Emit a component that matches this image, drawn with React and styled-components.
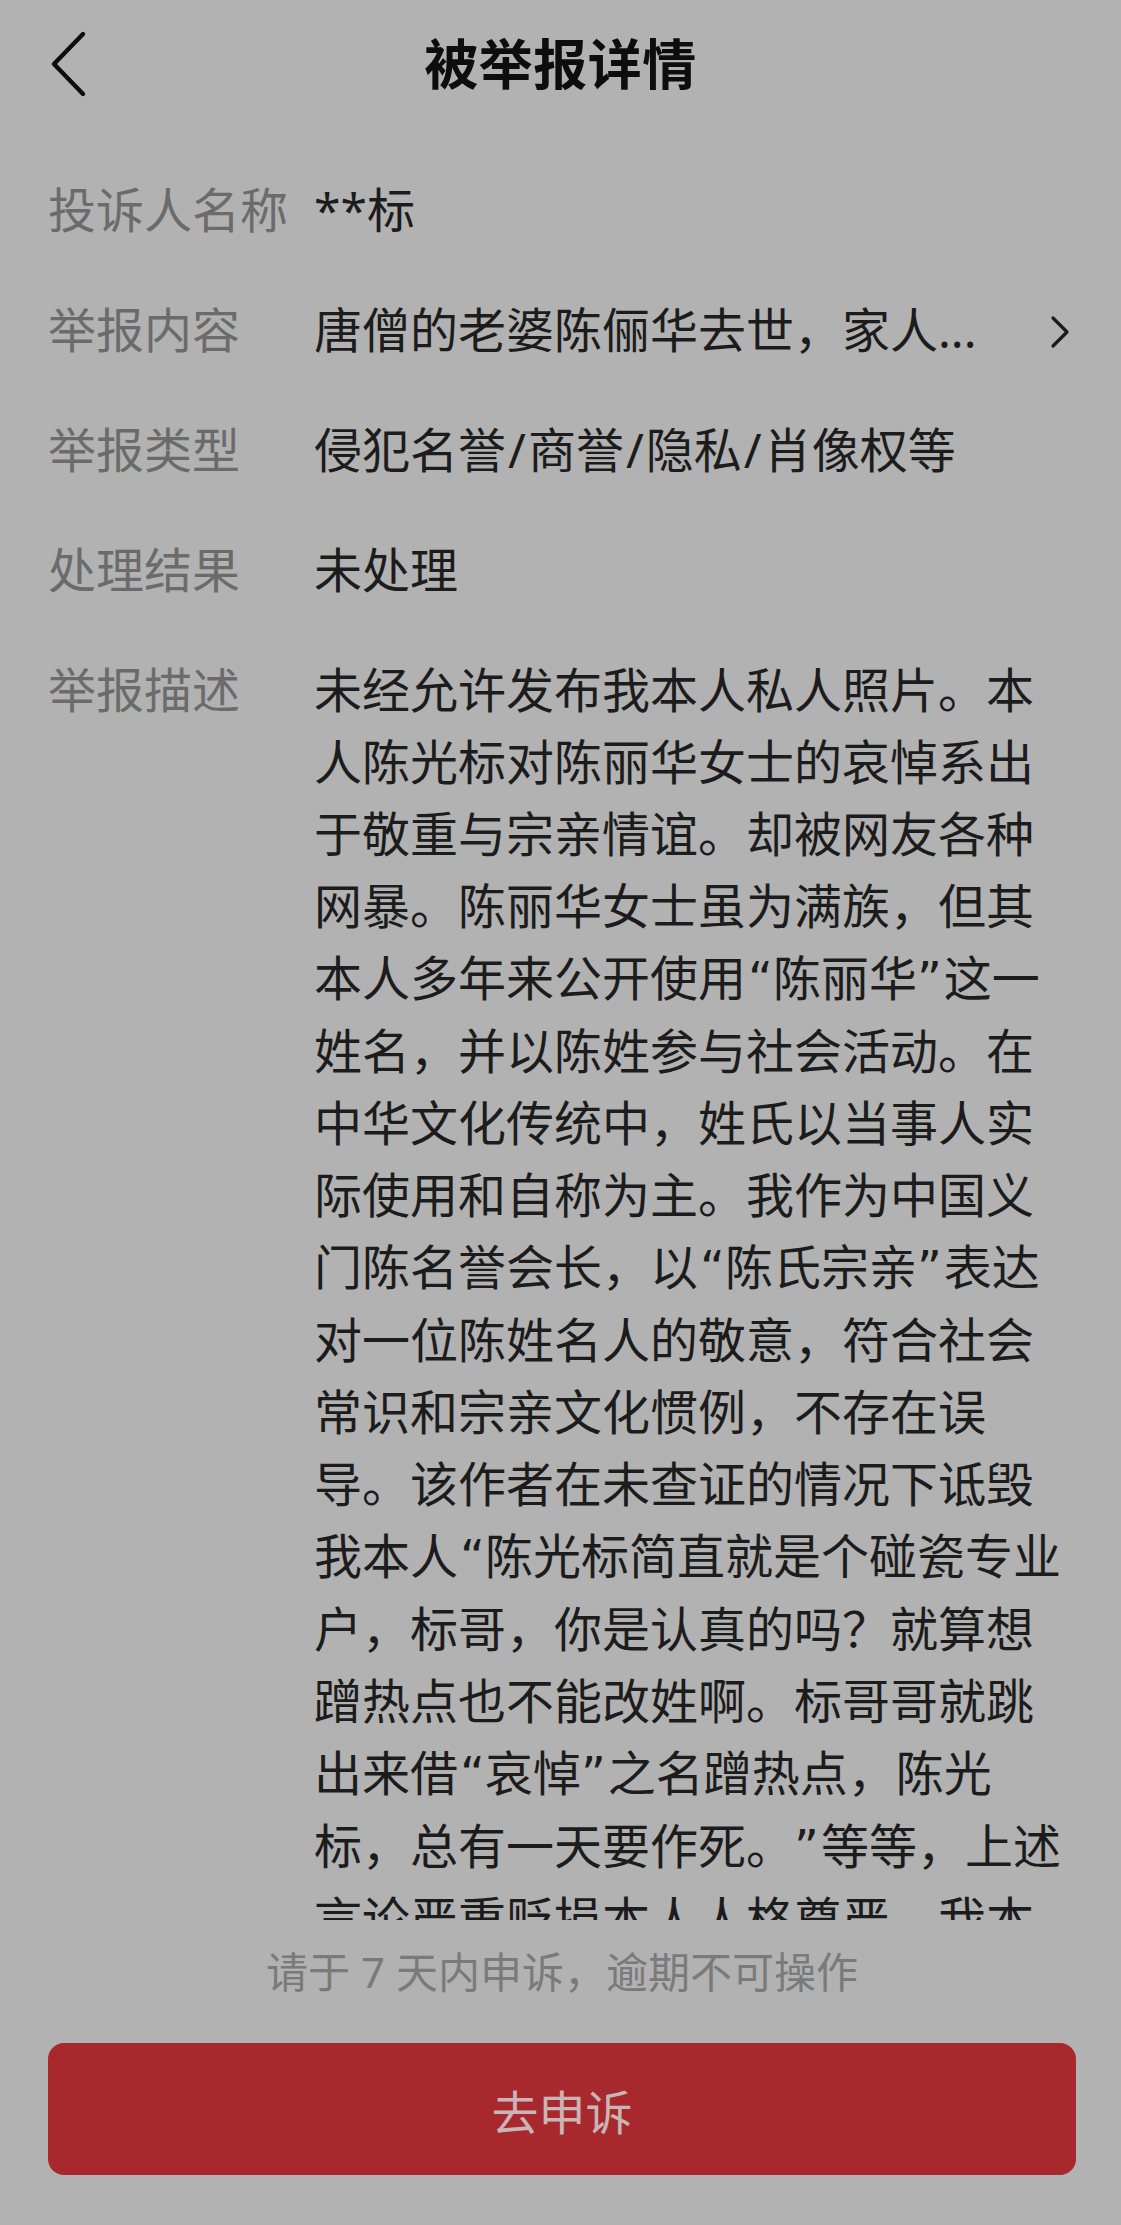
import styled, { css, createGlobalStyle } from 'styled-components';

const GlobalStyle = createGlobalStyle`
    html, body {
        margin: 0;
        padding: 0;
        background: #b2b2b2;
    }

    body {
        /* latin face first so quotes and slashes come out narrow, like the app font */
        font-family: "Noto Sans", "Noto Sans CJK SC", sans-serif;
        -webkit-font-smoothing: antialiased;
        text-spacing-trim: space-all;
    }
`;

const rows = [
    { label: '投诉人名称', value: '**标' },
    { label: '举报内容', value: '唐僧的老婆陈俪华去世，家人...', link: true },
    { label: '举报类型', value: '侵犯名誉/商誉/隐私/肖像权等' },
    { label: '处理结果', value: '未处理' },
];

// the description is laid out line by line, as in the app
const description = [
    '未经允许发布我本人私人照片。本',
    '人陈光标对陈丽华女士的哀悼系出',
    '于敬重与宗亲情谊。却被网友各种',
    '网暴。陈丽华女士虽为满族，但其',
    '本人多年来公开使用“陈丽华”这一',
    '姓名，并以陈姓参与社会活动。在',
    '中华文化传统中，姓氏以当事人实',
    '际使用和自称为主。我作为中国义',
    '门陈名誉会长，以“陈氏宗亲”表达',
    '对一位陈姓名人的敬意，符合社会',
    '常识和宗亲文化惯例，不存在误',
    '导。该作者在未查证的情况下诋毁',
    '我本人“陈光标简直就是个碰瓷专业',
    '户，标哥，你是认真的吗？就算想',
    '蹭热点也不能改姓啊。标哥哥就跳',
    '出来借“哀悼”之名蹭热点，陈光',
    '标，总有一天要作死。”等等，上述',
    '言论严重贬损本人人格尊严，我本',
    '人保留追究其法律责任的权利。',
];

// quotes and slashes get their own span so their width matches the app font
function withMarks(text) {
    return text.split(/([“”/])/).map((part, i) => {
        if (part === '“') return <Mark key={i} $kind="open">{part}</Mark>;
        if (part === '”') return <Mark key={i} $kind="close">{part}</Mark>;
        if (part === '/') return <Mark key={i} $kind="slash">{part}</Mark>;
        return part;
    });
}

function BackIcon() {
    return (
        <svg width="40" height="68" viewBox="0 0 40 68" fill="none">
            <path d="M35 4 L6 34 L35 64" stroke="#0d0d0d" strokeWidth="4.4" strokeLinecap="round" strokeLinejoin="round" />
        </svg>
    );
}

function ArrowIcon() {
    return (
        <svg width="24" height="36" viewBox="0 0 24 36" fill="none">
            <path d="M4 5 L18 19 L4 33" stroke="#1c1c1c" strokeWidth="3.2" strokeLinecap="round" strokeLinejoin="round" />
        </svg>
    );
}

function App() {
    return (
        <>
            <GlobalStyle />
            <Page>
                <Header>
                    <BackButton aria-label="返回">
                        <BackIcon />
                    </BackButton>
                    <Title>被举报详情</Title>
                    <span />
                </Header>

                <Content>
                    <InfoList>
                        {rows.map((row) => (
                            <Row key={row.label}>
                                <Label>{row.label}</Label>
                                <Value>
                                    <span>{withMarks(row.value)}</span>
                                    {row.link && <ArrowIcon />}
                                </Value>
                            </Row>
                        ))}
                        <Row>
                            <Label>举报描述</Label>
                            <Description>
                                {description.map((line, i) => (
                                    <DescLine key={i}>{withMarks(line)}</DescLine>
                                ))}
                            </Description>
                        </Row>
                    </InfoList>
                </Content>

                <Footer>
                    <Hint>请于 7 天内申诉，逾期不可操作</Hint>
                    <AppealButton>去申诉</AppealButton>
                </Footer>
            </Page>
        </>
    );
}

const Page = styled.div`
    height: 2225px;
    display: flex;
    flex-direction: column;
    overflow: hidden;
    background: #b2b2b2;
`;

const Header = styled.header`
    height: 128px;
    flex-shrink: 0;
    display: grid;
    grid-template-columns: 1fr auto 1fr;
    align-items: center;
`;

const BackButton = styled.button`
    justify-self: start;
    display: flex;
    align-items: center;
    padding: 0 0 0 48px;
    border: 0;
    background: none;
    cursor: pointer;
`;

const Title = styled.h1`
    margin: 0;
    font-size: 54px;
    font-weight: 700;
    line-height: 1;
    color: #0d0d0d;
    letter-spacing: 0.5px;
`;

const Content = styled.main`
    flex: 1;
    min-height: 0;
    overflow: hidden;
    padding: 46px 48px 0 48px;
`;

const InfoList = styled.div`
    display: flex;
    flex-direction: column;
    gap: 48px;
`;

const Row = styled.div`
    display: grid;
    grid-template-columns: 266px 1fr;
    align-items: start;
    font-size: 48px;
    line-height: 72px;
`;

const Label = styled.div`
    color: #6b6b6b;
    white-space: nowrap;
`;

const Value = styled.div`
    display: flex;
    align-items: center;
    justify-content: space-between;
    height: 72px;
    color: #1c1c1c;
    white-space: nowrap;

    svg {
        flex-shrink: 0;
        margin-top: 2px;
    }
`;

const Mark = styled.span`
    ${({ $kind }) => ($kind === 'open' || $kind === 'close') && css`
        font-family: "DejaVu Sans", "Noto Sans", sans-serif;
        font-weight: 400;
    `}
    ${({ $kind }) => $kind === 'open' && css`
        margin-left: 2px;
    `}
    ${({ $kind }) => $kind === 'close' && css`
        margin-right: 2px;
    `}
    ${({ $kind }) => $kind === 'slash' && css`
        margin: 0 2px;
    `}
`;

const Description = styled.div`
    color: #1c1c1c;
`;

const DescLine = styled.div`
    white-space: nowrap;
`;

const Footer = styled.footer`
    flex-shrink: 0;
    display: flex;
    flex-direction: column;
    padding: 24px 45px 50px 48px;
`;

const Hint = styled.p`
    margin: 0 0 43px;
    font-size: 42px;
    line-height: 56px;
    text-align: center;
    color: #7a7a7a;
`;

const AppealButton = styled.button`
    height: 132px;
    border: 0;
    border-radius: 16px;
    background: #a8292d;
    color: #c9b5b6;
    font-family: inherit;
    font-size: 47px;
    cursor: pointer;
`;

export default App;
